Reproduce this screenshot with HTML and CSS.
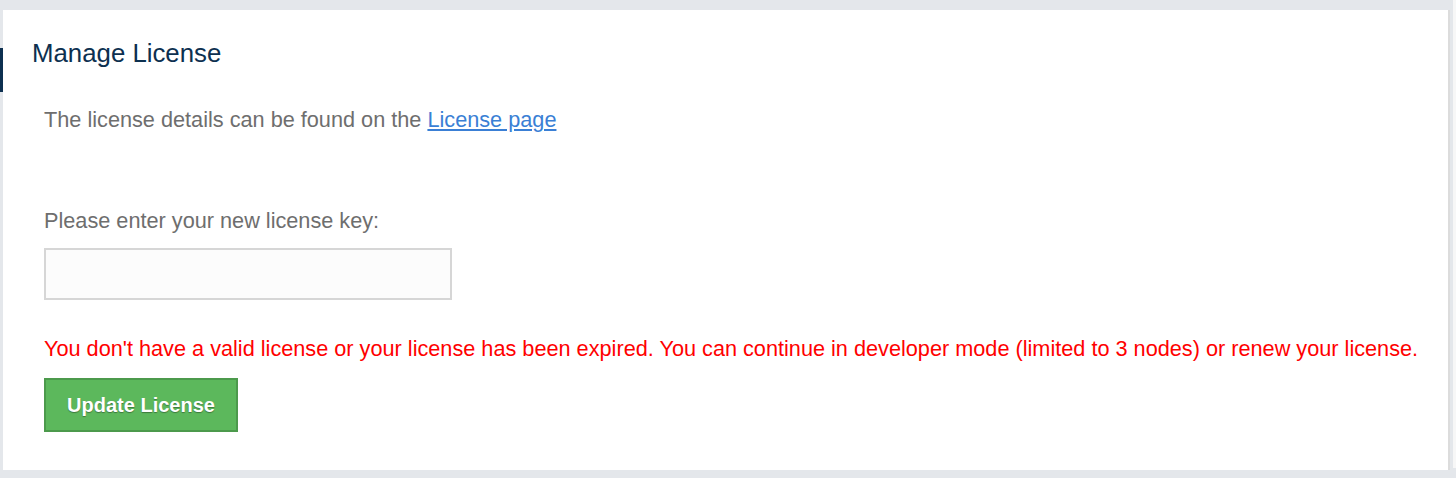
FILE: index.html
```html
<!DOCTYPE html>
<html>
<head>
<meta charset="utf-8">
<link rel="stylesheet" href="styles.css">
</head>
<body>
<div class="page">
  <div class="card">
    <div class="card-head">
      <span class="marker"></span>
      <h1 class="title">Manage License</h1>
    </div>
    <div class="card-body">
      <p class="info">The license details can be found on the <a href="#" class="link">License page</a></p>
      <label class="label" for="key">Please enter your new license key:</label>
      <input id="key" class="input" type="text">
      <p class="error">You don't have a valid license or your license has been expired. You can continue in developer mode (limited to 3 nodes) or renew your license.</p>
      <button class="btn" type="button">Update License</button>
    </div>
  </div>
</div>
</body>
</html>
```

FILE: styles.css
```css
html, body {
  margin: 0;
  padding: 0;
  height: 100%;
  background: #e4e7eb;
  font-family: "Liberation Sans", Arial, sans-serif;
  overflow: hidden;
}
.page {
  padding: 10px 3px 0 3px;
  height: 468px;
  box-sizing: border-box;
  border-right: 3px solid #f7f7f7;
}
.card {
  background: #fff;
  border-right: 2px solid #dcdcdc;
  height: 460px;
  box-sizing: border-box;
  position: relative;
}
.card-head {
  height: 80px;
  display: flex;
  align-items: flex-start;
}
.marker {
  position: absolute;
  left: -3px;
  top: 38px;
  width: 3px;
  height: 44px;
  background: #0d3050;
}
.title {
  margin: 28px 0 0 29px;
  font-size: 25.8px;
  font-weight: normal;
  color: #0d3050;
  line-height: 30px;
}
.card-body {
  padding: 0 0 0 41px;
  display: flex;
  flex-direction: column;
  align-items: flex-start;
}
.info {
  margin: 17px 0 0 0;
  font-size: 21.7px;
  line-height: 26px;
  color: #6e6e6e;
}
.link {
  color: #3a7fd5;
  text-decoration: underline;
}
.label {
  margin-top: 75px;
  font-size: 21.7px;
  line-height: 26px;
  color: #6e6e6e;
}
.input {
  margin-top: 14px;
  width: 408px;
  height: 52px;
  box-sizing: border-box;
  border: 2px solid #d6d6d6;
  background: #fcfcfc;
  outline: none;
  padding: 0 10px;
}
.error {
  margin: 36px 0 0 0;
  font-size: 21.7px;
  line-height: 26px;
  color: #ff0000;
}
.btn {
  margin-top: 16px;
  width: 194px;
  height: 54px;
  box-sizing: border-box;
  background: #5cb85c;
  border: 2px solid #4c9a4c;
  color: #fff;
  font-family: "Liberation Sans", Arial, sans-serif;
  font-size: 20px;
  font-weight: bold;
  text-shadow: 0 1px 1px rgba(0,0,0,0.35);
  cursor: pointer;
}
```
